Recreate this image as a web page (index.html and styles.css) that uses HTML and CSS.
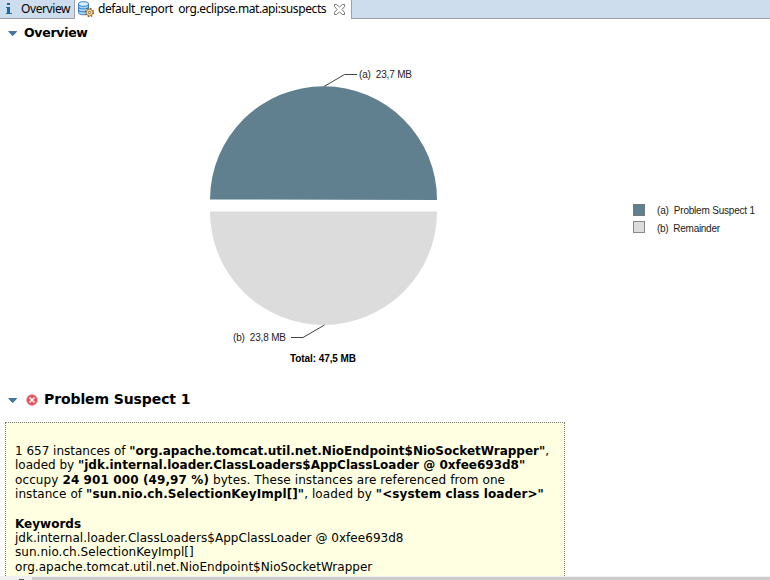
FILE: index.html
```html
<!DOCTYPE html>
<html lang="en">
<head>
<meta charset="utf-8">
<title>Leak Suspects</title>
<link rel="stylesheet" href="styles.css">
</head>
<body>
<nav class="tabs">
  <div class="tab">
    <svg class="info" width="8" height="12" viewBox="0 0 8 12"><path fill="#176aa5" d="M2 0h3v2H2zM1 4h4v6h2v1H1v-1h1V5H1z"/></svg>
    <span class="tab-overview">Overview</span>
  </div>
  <div class="tab active">
    <svg class="db" width="17" height="17" viewBox="0 0 17 17">
      <path fill="#a9d5f5" stroke="#347fc0" d="M.5 3v8.500c0 3 10 3 10 0V3"/>
      <ellipse cx="5.500" cy="3" rx="5" ry="2.300" fill="#d8effc" stroke="#347fc0"/>
      <path fill="none" stroke="#347fc0" d="M.5 6c0 2.500 10 2.500 10 0M.5 9c0 2.500 10 2.500 10 0"/>
      <circle cx="11.500" cy="11.500" r="4" fill="none" stroke="#8c5a1c" stroke-width="1.400" stroke-dasharray="1.600 1.540"/>
      <circle cx="11.500" cy="11.500" r="3.300" fill="#f7e3a6" stroke="#966722" stroke-width=".8"/>
      <circle cx="11.500" cy="11.500" r="1.200" fill="#fff" stroke="#704010" stroke-width=".8"/>
    </svg>
    <span class="tab-report">default_report&nbsp; org.eclipse.mat.api:suspects</span>
    <svg class="close" width="11" height="11" viewBox="0 0 11 11"><path fill="#fff" stroke="#777" d="M.5.5h2l3 2.500 3-2.500h2v2L8 5.500l2.500 3v2h-2L5.500 8l-3 2.500h-2v-2l2.500-3-2.500-3z"/></svg>
  </div>
</nav>
<main>
  <h2 class="heading overview">
    <svg class="arrow" width="10" height="6" viewBox="0 0 10 6"><path fill="#3f78aa" stroke="#285580" stroke-width=".7" d="M.7.5h8L4.700 4.700z"/></svg>
    <span>Overview</span>
  </h2>
  <svg class="chart" width="770" height="320" viewBox="0 60 770 320">
    <path fill="#61808f" d="M210 199.500A113.500 113.500 0 0 1 437 200z"/>
    <path fill="#dcdcdc" d="M210 211.500A113.500 113.500 0 0 0 437 211.500z"/>
    <path class="leader" d="M324 86.500L344.500 74.500H357M324.500 325L303 337.500H291"/>
    <text x="359" y="78" textLength="53">(a)&nbsp; 23,7 MB</text>
    <text x="233" y="341" textLength="53">(b)&nbsp; 23,8 MB</text>
    <text class="total" x="290" y="362" textLength="66">Total: 47,5 MB</text>
    <rect x="633.500" y="204.500" width="11" height="11" fill="#61808f" stroke="#777"/>
    <rect x="633.500" y="221.500" width="11" height="11" fill="#dcdcdc" stroke="#888"/>
    <text x="657" y="214" textLength="98">(a)&nbsp; Problem Suspect 1</text>
    <text x="657" y="232" textLength="63">(b)&nbsp; Remainder</text>
  </svg>
  <h2 class="heading problem">
    <svg class="arrow" width="10" height="6" viewBox="0 0 10 6"><path fill="#3f78aa" stroke="#285580" stroke-width=".7" d="M.7.5h8L4.700 4.700z"/></svg>
    <svg class="error" width="12" height="12" viewBox="0 0 12 12"><circle cx="6" cy="6" r="5.200" fill="#e4525c" stroke="#e0747b"/><path stroke="#fff" stroke-width="1.500" d="M3.500 3.500l5 5M8.500 3.500l-5 5"/></svg>
    <span>Problem Suspect 1</span>
  </h2>
  <section class="details">
    <p>
      <span class="line l1">1 657 instances of <b>"org.apache.tomcat.util.net.NioEndpoint$NioSocketWrapper"</b>,</span>
      <span class="line l2">loaded by <b>"jdk.internal.loader.ClassLoaders$AppClassLoader @ 0xfee693d8"</b></span>
      <span class="line l3">occupy <b>24 901 000 (49,97 %)</b> bytes. These instances are referenced from one</span>
      <span class="line l4">instance of <b>"sun.nio.ch.SelectionKeyImpl[]"</b>, loaded by <b>"&lt;system class loader&gt;"</b></span>
    </p>
    <p>
      <b class="line">Keywords</b>
      <span class="line keyword">jdk.internal.loader.ClassLoaders$AppClassLoader @ 0xfee693d8</span>
      <span class="line keyword last">sun.nio.ch.SelectionKeyImpl[]</span>
      <span class="line keyword">org.apache.tomcat.util.net.NioEndpoint$NioSocketWrapper</span>
    </p>
  </section>
</main>
<footer class="scrollbar"><div class="button"><i></i></div><div class="thumb"></div></footer>
</body>
</html>
```

FILE: styles.css
```css
* { box-sizing: border-box; }
body {
  margin: 0; height: 580px; overflow: hidden; background: #fff; color: #000;
  display: flex; flex-direction: column;
  font-family: "DejaVu Sans", Verdana, sans-serif; font-size: 12px;
}
svg { display: block; flex: none; }
.tabs {
  display: flex; height: 19px; flex: none; background: #cddded;
  border-bottom: 1px solid #a0a0a0;
  font: 12px/18px "Noto Sans", "Segoe UI", sans-serif; white-space: nowrap;
}
.tab { display: flex; width: 75px; border-right: 1px solid #a0a0a0; }
.tab.active { width: 277px; height: 19px; background: #fff; }
.info { margin: 3px 8px 0 5px; }
.db { margin: 1px 3px 0; }
.close { margin: 4px 0 0 auto; }
.tab.active { padding-right: 6px; }
.tab-overview { letter-spacing: -.4px; }
.tab-report { letter-spacing: -.41px; }
main { flex: 1; min-height: 0; overflow: hidden; }
.heading { display: flex; margin: 0; padding-left: 8px; font-weight: bold; }
.arrow { margin-right: 6px; }
.overview { height: 41px; font-size: 12.500px; line-height: 28px; letter-spacing: -.28px; }
.overview .arrow { margin-top: 12px; }
.chart text { font: 10px "Liberation Sans", Arial, sans-serif; fill: #222; }
.chart .total { font-weight: bold; fill: #000; }
.leader { fill: none; stroke: #444; }
.problem { height: 42px; font-size: 14px; line-height: 38px; letter-spacing: -.1px; }
.problem .arrow { margin: 18px 8px 0 0; }
.error { margin: 14px 6px 0 0; }
.details {
  width: 560px; height: 190px; margin-left: 5px; padding: 21px 9px;
  background: #ffffe1; border: 1px dotted #808070;
}
.details p { margin: 0 0 15px; }
.line { display: block; height: 14.400px; line-height: 14.400px; white-space: nowrap; }
.l1 { letter-spacing: -.01px; }
.l3 { letter-spacing: .105px; }
.l4 { letter-spacing: .085px; }
.keyword { letter-spacing: .035px; }
.last { height: 15px; line-height: 15px; }
.scrollbar { display: flex; height: 4px; flex: none; background: #f0f0f0; }
.button { width: 32px; display: flex; justify-content: flex-end; }
.button i { width: 5px; height: 1px; margin: 3px 8px 0 0; background: #555; }
.thumb { flex: 1; margin-top: 1px; background: #cdcdcd; }
```
